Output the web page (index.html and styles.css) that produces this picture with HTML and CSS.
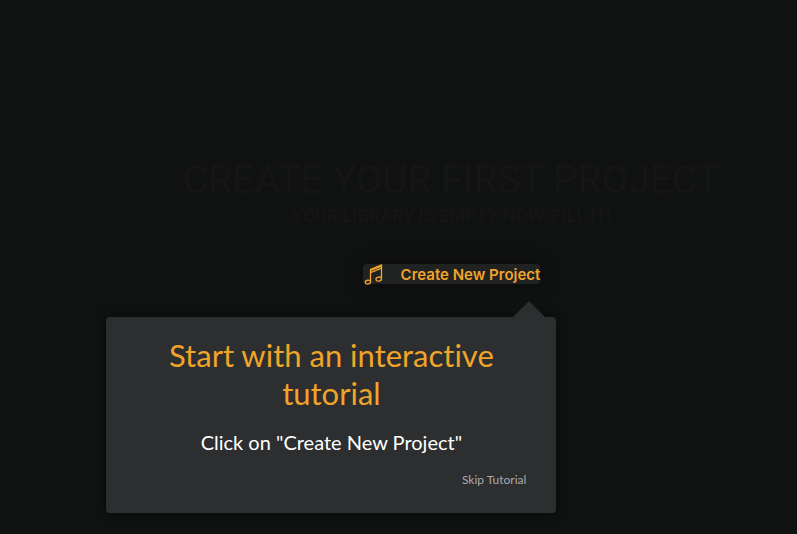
FILE: index.html
```html
<!DOCTYPE html>
<html lang="en">
<head>
    <meta charset="UTF-8">
    <meta name="viewport" content="width=device-width, initial-scale=1.0">
    <title>Create your first project</title>
    <link rel="stylesheet" href="styles.css">
</head>
<body>
    <main class="library">
        <h1>CREATE YOUR FIRST PROJECT</h1>
        <p class="subtitle">YOUR LIBRARY IS EMPTY NOW, FILL IT!</p>
        <div class="create-wrap">
            <button type="button" class="create-button">
                <svg class="note-icon" viewBox="0 0 20 22" aria-hidden="true">
                    <path d="M7.5 18V5.5L18.5 1V14M7.5 8.7L18.5 4.2M7.5 6.5L18.5 2.1" />
                    <ellipse cx="4.9" cy="18.1" rx="2.7" ry="1.9" transform="rotate(-12 4.9 18.1)" />
                    <ellipse cx="15.7" cy="15.1" rx="2.8" ry="2" transform="rotate(-12 15.7 15.1)" />
                </svg>
                <span>Create New Project</span>
            </button>
            <div class="tutorial" role="dialog" aria-labelledby="tutorialTitle">
                <h2 id="tutorialTitle">Start with an interactive tutorial</h2>
                <p>Click on "Create New Project"</p>
                <a href="#" class="skip-link">Skip Tutorial</a>
            </div>
        </div>
    </main>
</body>
</html>
```

FILE: styles.css
```css
* {
    margin: 0;
    padding: 0;
    box-sizing: border-box;
}
body {
    font-family: Lato, "Liberation Sans", sans-serif;
    background-color: #101211;
    min-height: 100vh;
}
.library {
    display: flex;
    flex-direction: column;
    align-items: center;
    padding: 156px 0 0 106px;
    font-family: Roboto, "Liberation Sans", sans-serif;
    color: #151515;
}
h1 {
    font-size: 39px;
    font-weight: 400;
    line-height: 48px;
    white-space: nowrap;
}
.subtitle {
    font-size: 18px;
    font-weight: 500;
    line-height: 24px;
    white-space: nowrap;
}
.create-wrap {
    position: relative;
    margin-top: 36px;
}
.create-button {
    display: flex;
    align-items: center;
    gap: 18px;
    height: 20px;
    padding-top: 2px;
    border: none;
    border-radius: 4px;
    background-color: #1f2221;
    box-shadow: 0 0 16px rgba(0, 0, 0, 0.5);
    color: #f0a429;
    font-family: Inter, "Liberation Sans", sans-serif;
    font-size: 15px;
    font-weight: 600;
    line-height: 20px;
    white-space: nowrap;
    cursor: pointer;
}
.note-icon {
    width: 20px;
    height: 22px;
    fill: none;
    stroke: #f0a429;
    stroke-width: 1.3;
}
.tutorial {
    position: absolute;
    top: 53px;
    right: -16px;
    width: 450px;
    padding: 19px 30px 25px;
    border-radius: 4px;
    background-color: #2d2e30;
    box-shadow: 0 0 10px rgba(0, 0, 0, 0.6);
    font-family: Lato, "Liberation Sans", sans-serif;
    font-variant-ligatures: none;
    text-align: center;
}
.tutorial::before {
    content: "";
    position: absolute;
    top: -16px;
    right: 11px;
    border: 16px solid transparent;
    border-top: none;
    border-bottom-color: #2d2e30;
}
.tutorial h2 {
    color: #f0a429;
    font-size: 31px;
    font-weight: 400;
    line-height: 38px;
}
.tutorial p {
    margin-top: 18px;
    color: #fff;
    font-size: 20px;
    line-height: 24px;
}
.skip-link {
    display: block;
    width: fit-content;
    margin: 18px 0 0 auto;
    color: #aaa;
    font-size: 12px;
    line-height: 16px;
    text-decoration: none;
}
```
